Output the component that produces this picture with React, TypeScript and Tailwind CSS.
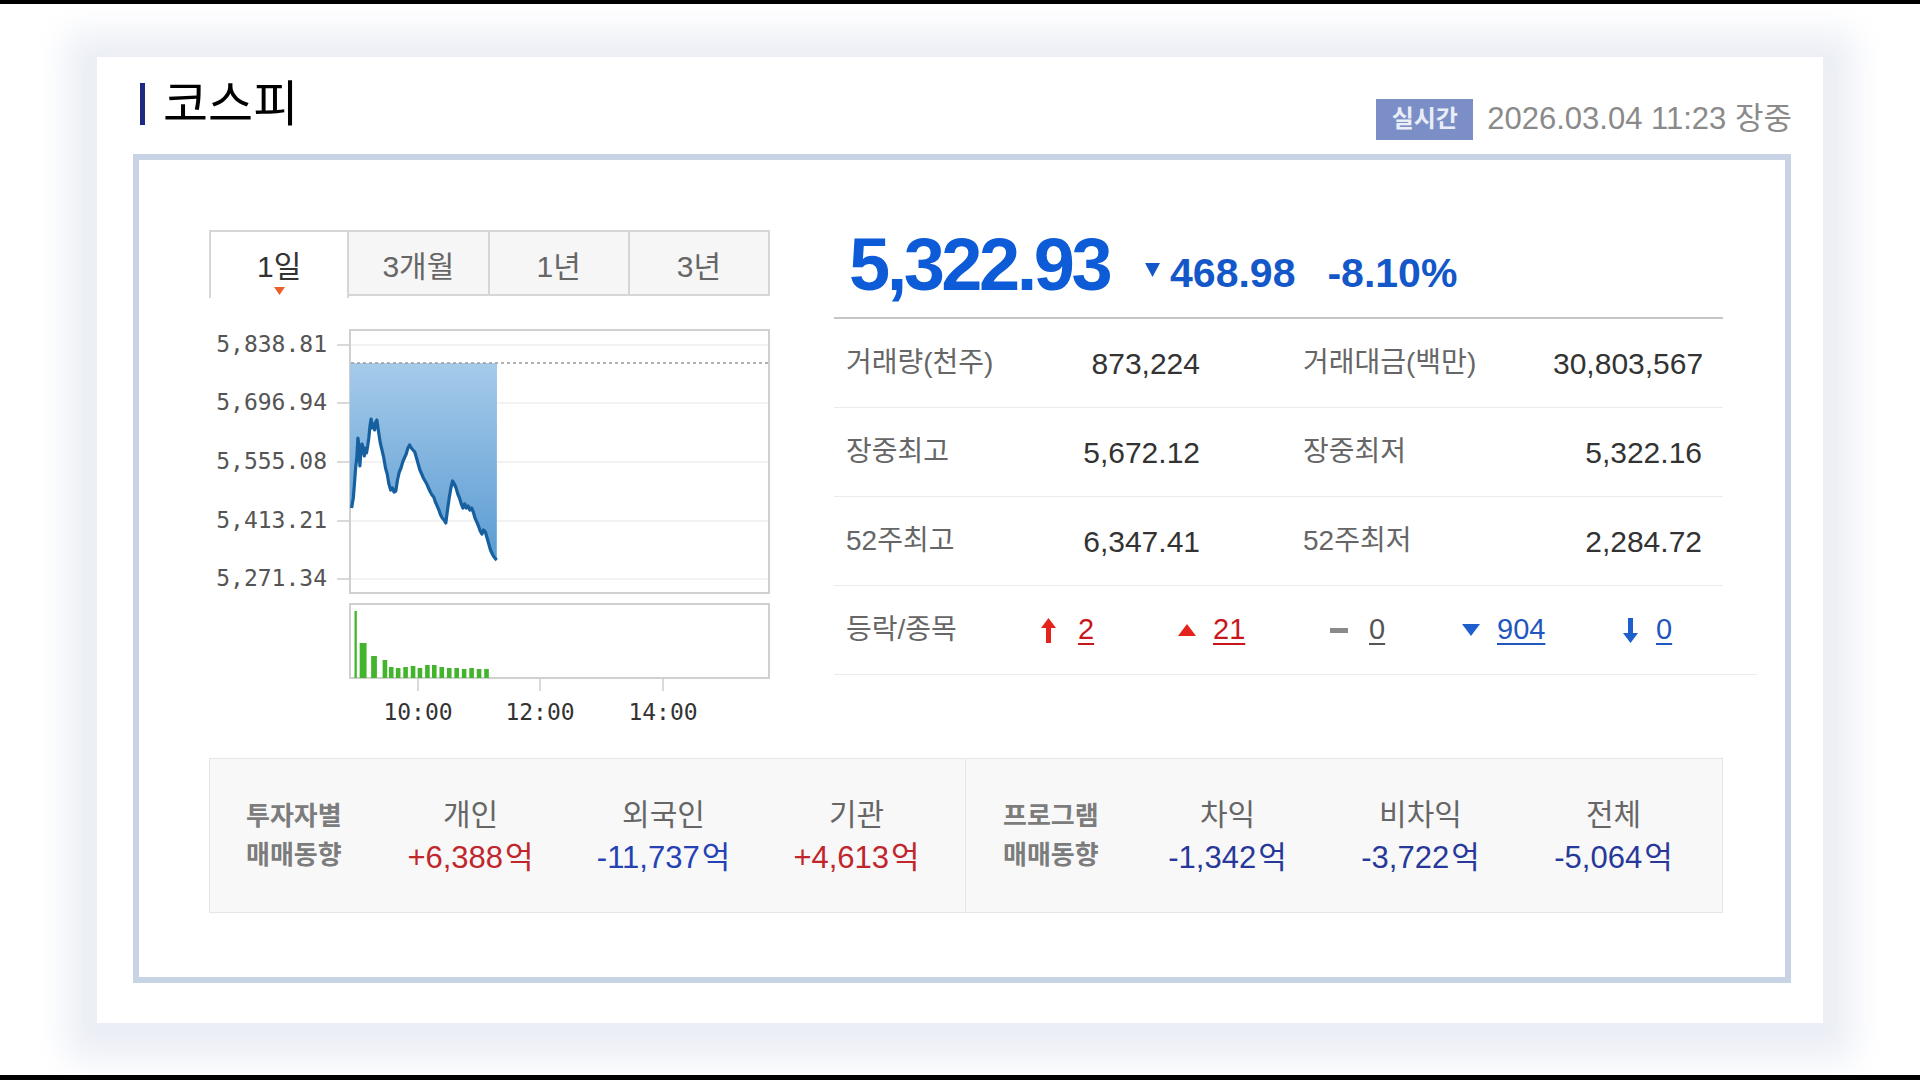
import React from 'react';

// points were read at the old horizontal scale; sx() stretches them onto the chart box
const sx = (x: number) => (x + 29) * 1.148 - 29;

const LINE: [number, number][] = [
  [120.5, 210], [122, 200], [123, 185], [124, 170], [125, 160], [126, 140], [127, 150], [127.7, 168], [128.5, 155], [129.5, 146],
  [130.5, 150], [131.5, 158], [132.5, 150], [133.5, 155], [134.5, 148], [135.5, 140], [136.5, 128], [137.5, 121], [138.5, 130],
  [139.5, 126], [140.5, 132], [141.5, 124], [142.5, 122], [143.5, 130], [144.5, 138], [145.5, 145], [147, 152], [148.5, 160],
  [150, 170], [151.5, 176], [153, 186], [154.5, 192], [156, 190], [157.5, 194], [159, 193], [160.5, 182], [162, 174], [163.5, 170],
  [165, 164], [166.5, 160], [168, 156], [169.5, 150], [171, 147], [172.5, 150], [174, 152], [175.5, 154], [177, 160], [178.5, 166],
  [180, 172], [181.5, 176], [183, 180], [184.5, 183], [186, 186], [187.5, 190], [189, 194], [190.5, 197], [192, 199], [193.5, 204],
  [195, 208], [196.5, 212], [198, 217], [199.5, 220], [201, 222], [202.5, 225], [204, 212], [205.5, 200], [207, 190], [208.5, 183],
  [210, 186], [211.5, 190], [213, 196], [214.5, 200], [216, 206], [217.5, 210], [219, 206], [220.5, 210], [222, 208], [223.5, 212],
  [225, 210], [226.5, 214], [228, 220], [229.5, 224], [231, 228], [232.5, 233], [234, 236], [235.5, 232], [237, 234], [238.5, 240],
  [240, 246], [241.5, 252], [243, 256], [244.5, 259], [246, 261], [247, 262],
];

// x, width, top  (bottom of volume box is 380)
const VOL: [number, number, number][] = [
  [123, 2, 313], [127.5, 6, 345], [137.5, 5, 358], [147.5, 4, 362], [153, 4, 369], [159, 4, 370], [165.5, 4, 369], [172, 4, 368],
  [178, 4, 370], [184.5, 4, 367], [190.5, 4, 367], [197, 4, 369], [203.5, 4, 370], [210, 4, 370], [216.5, 4, 371], [223, 4, 370],
  [229.5, 4, 371], [236, 4, 371],
];

const Y_LABELS = [
  ['5,838.81', 47], ['5,696.94', 105], ['5,555.08', 164], ['5,413.21', 223], ['5,271.34', 281],
] as const;

const MONO = "'DejaVu Sans Mono', 'Liberation Mono', monospace";

function Chart() {
  const line = LINE.map(([x, y], i) => `${i ? 'L' : 'M'}${sx(x).toFixed(1)},${y}`).join(' ');
  const area = `${line} L288,65 L141,65 L141,210 Z`;
  return (
    <svg width="561" height="432" viewBox="0 0 561 432" className="block">
      <defs>
        <linearGradient id="fill" x1="0" y1="0" x2="0" y2="1">
          <stop offset="0" stopColor="#a6cbea" />
          <stop offset="1" stopColor="#5a9bd2" />
        </linearGradient>
      </defs>
      <rect x="141" y="32" width="419" height="263" fill="#fff" stroke="#d0d0d0" strokeWidth="2" />
      {Y_LABELS.map(([t, y]) => (
        <g key={t}>
          <line x1="142" x2="559" y1={y} y2={y} stroke="#eeeeee" strokeWidth="1.5" />
          <line x1="128" x2="141" y1={y} y2={y} stroke="#cccccc" strokeWidth="1.5" />
          <text x="118" y={y + 6.5} textAnchor="end" fontFamily={MONO} fontSize="23" fill="#555">{t}</text>
        </g>
      ))}
      <path d={area} fill="url(#fill)" />
      <line x1="142" x2="559" y1="65" y2="65" stroke="#9a9a9a" strokeWidth="1.5" strokeDasharray="3 3" />
      <path d={line} fill="none" stroke="#17609f" strokeWidth="3.2" strokeLinejoin="round" />

      <rect x="141" y="306" width="419" height="74" fill="#fff" stroke="#d0d0d0" strokeWidth="2" />
      {VOL.map(([x, w, top]) => (
        <rect key={x} x={sx(x)} y={top} width={w * 1.15} height={380 - top} fill="#42b52c" />
      ))}
      {([[209, '10:00'], [331, '12:00'], [454, '14:00']] as const).map(([x, t]) => (
        <g key={t}>
          <line x1={x} x2={x} y1="381" y2="393" stroke="#cccccc" strokeWidth="1.5" />
          <text x={x} y="422" textAnchor="middle" fontFamily={MONO} fontSize="23" fill="#333">{t}</text>
        </g>
      ))}
    </svg>
  );
}

function Tabs() {
  return (
    <div className="grid h-[68px] grid-cols-4">
      <div className="flex flex-col items-center border-x-2 border-t-2 border-[#d6d6d6] bg-white pt-[17px] text-[30px] leading-[36px] text-[#333]">
        1일
        <svg width="11" height="8" viewBox="0 0 11 8" className="mt-[2px]"><polygon points="0,0 11,0 5.5,8" fill="#e8612c" /></svg>
      </div>
      {['3개월', '1년', '3년'].map((t) => (
        <div key={t} className="flex h-[66px] items-center justify-center border-2 border-l-0 border-[#d6d6d6] bg-[#f6f6f6] pt-[6px] text-[30px] text-[#666]">{t}</div>
      ))}
    </div>
  );
}

function StatRow({ a, av, b, bv }: { a: string; av: string; b: string; bv: string }) {
  return (
    <div className="grid h-[89px] grid-cols-[200px_154px_103px_250px_149px] items-center border-b border-[#ebebeb] pl-[12px]">
      <span className="text-[28px] text-[#666]">{a}</span>
      <span className="text-right text-[30px] text-[#333]">{av}</span>
      <span />
      <span className="text-[28px] text-[#666]">{b}</span>
      <span className="text-right text-[30px] text-[#333]">{bv}</span>
    </div>
  );
}

function UpDownRow() {
  return (
    <div className="-mr-[34px] flex h-[89px] items-center border-b border-[#ebebeb] pl-[12px] text-[29px]">
      <span className="w-[195px] text-[28px] text-[#666]">등락/종목</span>
      <span className="flex w-[137px] items-center gap-[22px]">
        <svg width="15" height="25" viewBox="0 0 15 25"><polygon points="7.5,0 15,10 10,10 10,25 5,25 5,10 0,10" fill="#e3231c" /></svg>
        <span className="text-[#c8161d] underline underline-offset-4">2</span>
      </span>
      <span className="flex w-[152px] items-center gap-[17px]">
        <svg width="18" height="12" viewBox="0 0 18 12"><polygon points="9,0 18,12 0,12" fill="#e3231c" /></svg>
        <span className="text-[#c8161d] underline underline-offset-4">21</span>
      </span>
      <span className="flex w-[132px] items-center gap-[21px]">
        <svg width="18" height="5" viewBox="0 0 18 5"><rect width="18" height="5" fill="#8a8a8a" /></svg>
        <span className="text-[#555] underline underline-offset-4">0</span>
      </span>
      <span className="flex w-[161px] items-center gap-[17px]">
        <svg width="18" height="12" viewBox="0 0 18 12"><polygon points="0,0 18,0 9,12" fill="#1d5fcc" /></svg>
        <span className="text-[#1f56c0] underline underline-offset-4">904</span>
      </span>
      <span className="flex items-center gap-[18px]">
        <svg width="15" height="25" viewBox="0 0 15 25"><polygon points="5,0 10,0 10,15 15,15 7.5,25 0,15 5,15" fill="#1d5fcc" /></svg>
        <span className="text-[#1f56c0] underline underline-offset-4">0</span>
      </span>
    </div>
  );
}

type Flow = { k: string; v: string; c: string };

function FlowHalf({ l1, l2, items, last }: { l1: string; l2: string; items: Flow[]; last?: boolean }) {
  return (
    <div className={last ? 'flex flex-1 items-center pl-[37px]' : 'flex flex-1 items-center border-r border-[#e6e6e6] pl-[36px]'}>
      <div className="w-[128px] text-[26px] font-bold leading-[39px] text-[#7c7c7c]">
        <div>{l1}</div>
        <div>{l2}</div>
      </div>
      {items.map((it) => (
        <div key={it.k} className="flex w-[193px] flex-col items-center leading-[43px]">
          <span className="text-[30px] text-[#666]">{it.k}</span>
          <span className={`text-[31px] ${it.c}`}>
            {it.v}
            <span className="ml-[2px]">억</span>
          </span>
        </div>
      ))}
    </div>
  );
}

export default function App() {
  return (
    <div className="flex h-screen w-full flex-col overflow-hidden bg-white font-['Liberation_Sans','Noto_Sans_CJK_KR',sans-serif]">
      <div className="relative z-10 h-[4px] shrink-0 bg-black" />
      <div className="flex-1 pl-[97px] pt-[53px]">
        <div className="flex h-[966px] w-[1726px] flex-col bg-white shadow-[0_6px_30px_30px_rgba(230,234,242,0.8)]">
          <div className="flex h-[97px] shrink-0 justify-between">
            <div className="ml-[43px] mt-[22px] flex items-center gap-[18px] self-start">
              <span className="h-[42px] w-[5px] bg-[#1b2a82]" />
              <span className="text-[49px] leading-[50px] text-black">코스피</span>
            </div>
            <div className="mr-[31px] mt-[39px] flex items-center gap-[14px] self-start">
              <span className="flex h-[41px] w-[97px] items-center justify-center bg-[#7b8ec6] text-[24px] font-bold text-[#e9edf8]">실시간</span>
              <span className="text-[31px] text-[#8a8a8a]">2026.03.04 11:23 장중</span>
            </div>
          </div>

          <div className="ml-[36px] mr-[32px] h-[829px] border-[6px] border-[#c8d4e6] pl-[70px] pr-[62px] pt-[70px]">
            <div className="flex gap-[64px]">
              <div className="w-[561px]">
                <Tabs />
                <Chart />
              </div>
              <div className="w-[889px]">
                <div className="flex h-[87px] items-end gap-[36px] pl-[15px] font-bold text-[#1357c9]">
                  <span className="pb-[15px] text-[74px] leading-none tracking-[-3.5px] text-[#0d5bd6]">5,322.93</span>
                  <span className="pb-[23px] text-[41px] leading-none">
                    <svg width="15" height="14" viewBox="0 0 15 14" className="mr-[10px] inline-block align-[10px]"><polygon points="0,0 15,0 7.5,14" fill="#1357c9" /></svg>
                    468.98
                  </span>
                  <span className="-ml-[4px] pb-[23px] text-[41px] leading-none">-8.10%</span>
                </div>
                <div className="h-[2px] bg-[#c6c6c6]" />
                <StatRow a="거래량(천주)" av="873,224" b="거래대금(백만)" bv="30,803,567" />
                <StatRow a="장중최고" av="5,672.12" b="장중최저" bv="5,322.16" />
                <StatRow a="52주최고" av="6,347.41" b="52주최저" bv="2,284.72" />
                <UpDownRow />
              </div>
            </div>

            <div className="mt-[28px] flex h-[155px] border border-[#e6e6e6] bg-[#f8f8f8]">
              <FlowHalf
                l1="투자자별"
                l2="매매동향"
                items={[
                  { k: '개인', v: '+6,388', c: 'text-[#c0262c]' },
                  { k: '외국인', v: '-11,737', c: 'text-[#2442b3]' },
                  { k: '기관', v: '+4,613', c: 'text-[#c0262c]' },
                ]}
              />
              <FlowHalf
                last
                l1="프로그램"
                l2="매매동향"
                items={[
                  { k: '차익', v: '-1,342', c: 'text-[#27389a]' },
                  { k: '비차익', v: '-3,722', c: 'text-[#27389a]' },
                  { k: '전체', v: '-5,064', c: 'text-[#27389a]' },
                ]}
              />
            </div>
          </div>
        </div>
      </div>
      <div className="relative z-10 h-[5px] shrink-0 bg-black" />
    </div>
  );
}
